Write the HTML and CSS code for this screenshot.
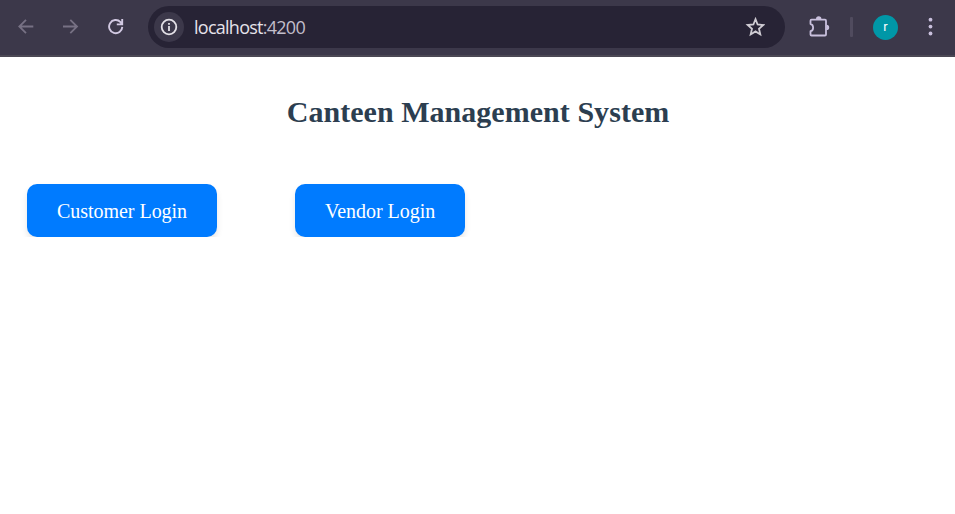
FILE: index.html
```html
<!DOCTYPE html>
<html lang="en">
<head>
<meta charset="utf-8">
<title>Canteen Management System</title>
<link rel="stylesheet" href="styles.css">
</head>
<body>
<header class="toolbar">
  <nav class="nav">
    <svg class="dim" width="16" height="16" viewBox="0 0 16 16"><path d="M15.3 7.5H1.5M8 .8L1.3 7.5 8 14.2"/></svg>
    <svg class="dim" width="16" height="16" viewBox="0 0 16 16"><path d="M0 7.5h13.8M7.300 .8l6.7 6.7-6.700 6.700"/></svg>
    <svg class="bright" width="16" height="16" viewBox="0 0 16 16"><path d="M14.3 7.9A6.6 6.6 0 1 1 12.5 3.1L14 4.8M14.2 0v5.4H8.8"/></svg>
  </nav>
  <div class="address">
    <span class="info"><svg width="18" height="18" viewBox="0 0 18 18"><circle cx="9" cy="9" r="7.3"/><path d="M9 8v5M9 5v1.8"/></svg></span>
    <span class="url">localhost<span class="port">:4200</span></span>
    <svg class="star" width="20" height="20" viewBox="0 0 20 20"><path d="M10.500 2.200l2.1 5.300 5.700.500-4.300 3.800 1.300 5.600-4.800-3-4.800 3 1.300-5.600-4.300-3.800 5.700-.500z"/></svg>
  </div>
  <svg class="puzzle" width="22" height="22" viewBox="0 0 22 22"><path class="outline" d="M3.5 3.7H17q1 0 1 1V18.500q0 1-1 1H3.500q-1 0-1-1V15.200C6 14.800 6 8.600 2.500 8.100V4.700q0-1 1-1z"/><path class="knob" d="M8 3a2.700 2.700 0 0 1 5.400 0zM18.500 8.700a2.700 2.700 0 0 1 0 5.400z"/></svg>
  <span class="divider"></span>
  <span class="avatar">r</span>
  <svg class="more" width="6" height="20" viewBox="0 0 6 20"><circle cx="3.500" cy="2.700" r="1.900"/><circle cx="3.500" cy="9.600" r="1.900"/><circle cx="3.500" cy="16.500" r="1.900"/></svg>
</header>
<main>
  <h1>Canteen Management System</h1>
  <div class="actions">
    <a class="button">Customer Login</a>
    <a class="button">Vendor Login</a>
  </div>
</main>
</body>
</html>
```

FILE: styles.css
```css
* { box-sizing: border-box; }
body { margin: 0; background: #fff; font-family: "Liberation Serif", serif; }
svg { display: block; flex: none; fill: none; }
.toolbar { display: flex; align-items: center; height: 57px; padding: 0 22px 1px 18px; background: #3c384a; border-bottom: 2px solid #4b4854; }
.nav { display: flex; gap: 29px; width: 130px; flex: none; }
.dim { stroke: #777184; stroke-width: 1.8; }
.bright { stroke: #d2c9e2; stroke-width: 1.900; }
.address { display: flex; align-items: center; width: 637px; height: 42px; padding: 0 20px 0 6px; border-radius: 21px; background: #272335; flex: none; }
.info { display: flex; align-items: center; justify-content: center; width: 30px; height: 30px; border-radius: 50%; background: #3c384a; }
.info svg { stroke: #e3e0e6; stroke-width: 1.800; }
.url { margin-left: 10px; font: 18px/24px "Open Sans", sans-serif; letter-spacing: -.74px; color: #e5e2ea; }
.port { color: #c2becb; }
.star { margin-left: auto; stroke: #cfccd3; stroke-width: 1.800; }
.puzzle { margin-left: 23px; }
.outline { stroke: #c9c0dd; stroke-width: 1.800; stroke-linejoin: round; }
.knob, .more { fill: #c9c0dd; }
.divider { width: 3px; height: 20px; margin-left: 20px; border-radius: 1px; background: #504b5e; }
.avatar { width: 25px; height: 25px; margin-left: 20px; border-radius: 50%; background: #0097a7; color: #fff; font: 13px/24px Roboto, sans-serif; text-align: center; }
.more { margin-left: auto; }
h1 { margin: 37px 0 54px; padding-left: 1px; font-size: 30px; line-height: 36px; letter-spacing: .04px; text-align: center; color: #2c3e50; }
.actions { display: flex; gap: 78px; padding-left: 27px; }
.button { padding: 16px 30px 14px; border-radius: 10px; background: #007bff; color: #fff; font-size: 20px; line-height: 23px; letter-spacing: -.035px; box-shadow: 0 4px 6px rgba(0, 0, 0, .1); }
```
